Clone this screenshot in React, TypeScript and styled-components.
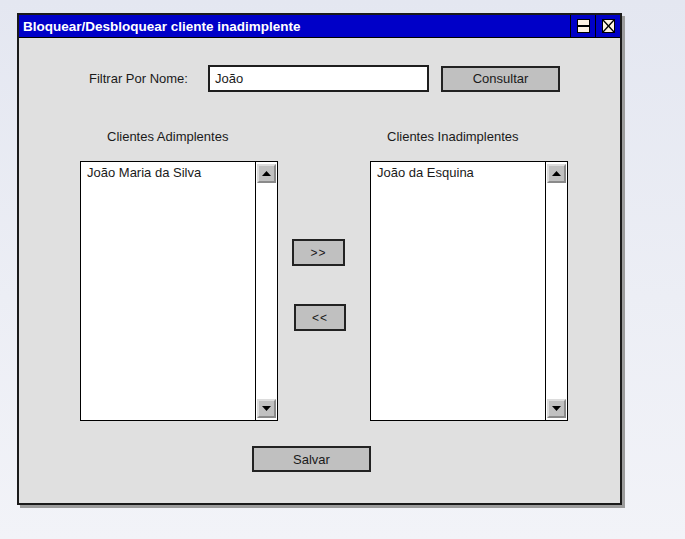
import styled, { createGlobalStyle } from "styled-components";

const GlobalStyle = createGlobalStyle`
  html, body {
    margin: 0;
    padding: 0;
  }
  body {
    width: 685px;
    height: 539px;
    overflow: hidden;
    background: linear-gradient(180deg, #e4e7f1 0%, #eceef5 55%, #f2f3f8 100%);
    font-family: "Liberation Sans", Arial, sans-serif;
    color: #1a1a1a;
  }
`;

const Window = styled.div`
  box-sizing: border-box;
  margin: 13px 0 0 17px;
  width: 605px;
  height: 492px;
  border: 2px solid #1a1a1a;
  background: #e0e0e0;
  box-shadow: 3px 3px 0 #9c9c9c;
  display: flex;
  flex-direction: column;
`;

const TitleBar = styled.div`
  height: 22px;
  background: #0000c8;
  border-bottom: 1px solid #000;
  display: flex;
  align-items: stretch;
`;

const Title = styled.div`
  flex: 1;
  padding-left: 4px;
  display: flex;
  align-items: center;
  color: #fff;
  font-weight: bold;
  font-size: 13.5px;
`;

const TitleButton = styled.div`
  width: 24px;
  border-left: 1px solid #000;
  display: flex;
  align-items: center;
  justify-content: center;
`;

const Content = styled.div`
  flex: 1;
  display: flex;
  flex-direction: column;
`;

const FilterRow = styled.div`
  display: flex;
  align-items: center;
  margin-top: 27px;
  padding-left: 70px;
`;

const Label = styled.span`
  width: 119px;
  font-size: 13px;
`;

const TextInput = styled.div`
  box-sizing: border-box;
  width: 221px;
  height: 27px;
  border: 2px solid #1e1e1e;
  background: #fff;
  padding-left: 5px;
  display: flex;
  align-items: center;
  font-size: 13px;
`;

const Button = styled.div<{ $width: number; $ml?: number }>`
  box-sizing: border-box;
  width: ${(p) => p.$width}px;
  height: 26px;
  margin-left: ${(p) => p.$ml ?? 0}px;
  border: 2px solid #222;
  background: #c0c0c0;
  display: flex;
  align-items: center;
  justify-content: center;
  font-size: 13px;
`;

const Transfer = styled.div`
  display: grid;
  grid-template-columns: 198px 92px 198px;
  grid-template-rows: 16px 260px;
  row-gap: 16px;
  margin-top: 37px;
  padding-left: 61px;
`;

const Heading = styled.div<{ $col: number; $indent: number }>`
  grid-column: ${(p) => p.$col};
  grid-row: 1;
  padding-left: ${(p) => p.$indent}px;
  font-size: 13px;
  line-height: 16px;
`;

const ListBox = styled.div<{ $col: number }>`
  grid-column: ${(p) => p.$col};
  grid-row: 2;
  box-sizing: border-box;
  border: 1px solid #000;
  background: #fff;
  display: flex;
`;

const Items = styled.div`
  flex: 1;
  padding: 3px 6px;
  font-size: 13px;
`;

const ScrollBar = styled.div`
  box-sizing: border-box;
  width: 22px;
  border-left: 1px solid #000;
  padding: 2px 1px 2px 1px;
  display: flex;
  flex-direction: column;
  justify-content: space-between;
`;

const ScrollArrow = styled.div`
  box-sizing: border-box;
  width: 19px;
  height: 19px;
  background: #c0c0c0;
  border-top: 2px solid #dcdcdc;
  border-left: 2px solid #dcdcdc;
  border-right: 2px solid #8a8a8a;
  border-bottom: 2px solid #8a8a8a;
  display: flex;
  align-items: center;
  justify-content: center;
`;

const Middle = styled.div`
  grid-column: 2;
  grid-row: 2;
  display: flex;
  flex-direction: column;
  align-items: flex-start;
  padding: 78px 0 0 14px;
  gap: 38px;
`;

const SmallButton = styled(Button)`
  height: 27px;
  font-size: 12px;
  letter-spacing: 1px;
`;

const SaveRow = styled.div`
  margin-top: 25px;
  padding-left: 233px;
`;

const Arrow = ({ up }: { up: boolean }) => (
  <svg width="9" height="5" viewBox="0 0 9 5">
    <polygon
      points={up ? "4.5,0 9,5 0,5" : "0,0 9,0 4.5,5"}
      fill="#000"
    />
  </svg>
);

const ClientList = ({ col, items }: { col: number; items: string[] }) => (
  <ListBox $col={col}>
    <Items>
      {items.map((name) => (
        <div key={name}>{name}</div>
      ))}
    </Items>
    <ScrollBar>
      <ScrollArrow>
        <Arrow up />
      </ScrollArrow>
      <ScrollArrow>
        <Arrow up={false} />
      </ScrollArrow>
    </ScrollBar>
  </ListBox>
);

const App = (): React.ReactElement => {
  return (
    <>
      <GlobalStyle />
      <Window>
        <TitleBar>
          <Title>Bloquear/Desbloquear cliente inadimplente</Title>
          <TitleButton>
            <svg width="13" height="14" viewBox="0 0 13 14">
              <rect x="0.5" y="0.5" width="12" height="13" fill="#fff3e3" stroke="#000" />
              <line x1="0" y1="7" x2="13" y2="7" stroke="#000" strokeWidth="2" />
            </svg>
          </TitleButton>
          <TitleButton>
            <svg width="13" height="14" viewBox="0 0 13 14">
              <rect x="0.5" y="0.5" width="12" height="13" fill="#fff3e3" stroke="#000" />
              <line x1="1" y1="1" x2="12" y2="13" stroke="#000" strokeWidth="1.3" />
              <line x1="12" y1="1" x2="1" y2="13" stroke="#000" strokeWidth="1.3" />
            </svg>
          </TitleButton>
        </TitleBar>
        <Content>
          <FilterRow>
            <Label>Filtrar Por Nome:</Label>
            <TextInput>João</TextInput>
            <Button $width={119} $ml={12}>
              Consultar
            </Button>
          </FilterRow>

          <Transfer>
            <Heading $col={1} $indent={27}>
              Clientes Adimplentes
            </Heading>
            <Heading $col={3} $indent={17}>
              Clientes Inadimplentes
            </Heading>
            <ClientList col={1} items={["João Maria da Silva"]} />
            <Middle>
              <SmallButton $width={53}>&gt;&gt;</SmallButton>
              <SmallButton $width={52} $ml={2}>
                &lt;&lt;
              </SmallButton>
            </Middle>
            <ClientList col={3} items={["João da Esquina"]} />
          </Transfer>

          <SaveRow>
            <Button $width={119}>Salvar</Button>
          </SaveRow>
        </Content>
      </Window>
    </>
  );
};

export default App;
